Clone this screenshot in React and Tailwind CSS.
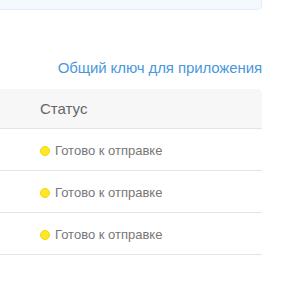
export default function App() {
  const rows = [1, 2, 3];

  return (
    <div className="w-[306px] h-[304px] bg-white font-['Liberation_Sans',Arial,sans-serif] overflow-hidden">
      <div className="w-[262px]">
        {/* top panel (cut off) */}
        <div className="h-[10px] bg-[#f5f9fd] border-r border-b border-[#e3edf7] rounded-br-[5px]" />

        {/* link */}
        <div className="flex justify-end pt-[48px] h-[79px]">
          <a href="#" className="text-[15px] leading-[20px] text-[#4a97dd] tracking-[-0.1px]">
            Общий ключ для приложения
          </a>
        </div>

        {/* table */}
        <div>
          <div className="h-[40px] bg-[#f7f7f7] rounded-tr-[5px] border-b border-[#e4e4e4] flex items-center pl-[40px] pt-[2px] text-[15px] text-[#666]">
            Статус
          </div>
          {rows.map((r) => (
            <div
              key={r}
              className="h-[42px] border-b border-[#e4e4e4] flex items-center pl-[40px] pt-[3px] text-[13px] text-[#777]"
            >
              <span className="w-[10px] h-[10px] rounded-full bg-[#ffe62b] border border-[#f2d800] mr-[5px]" />
              Готово к отправке
            </div>
          ))}
        </div>
      </div>
    </div>
  );
}
